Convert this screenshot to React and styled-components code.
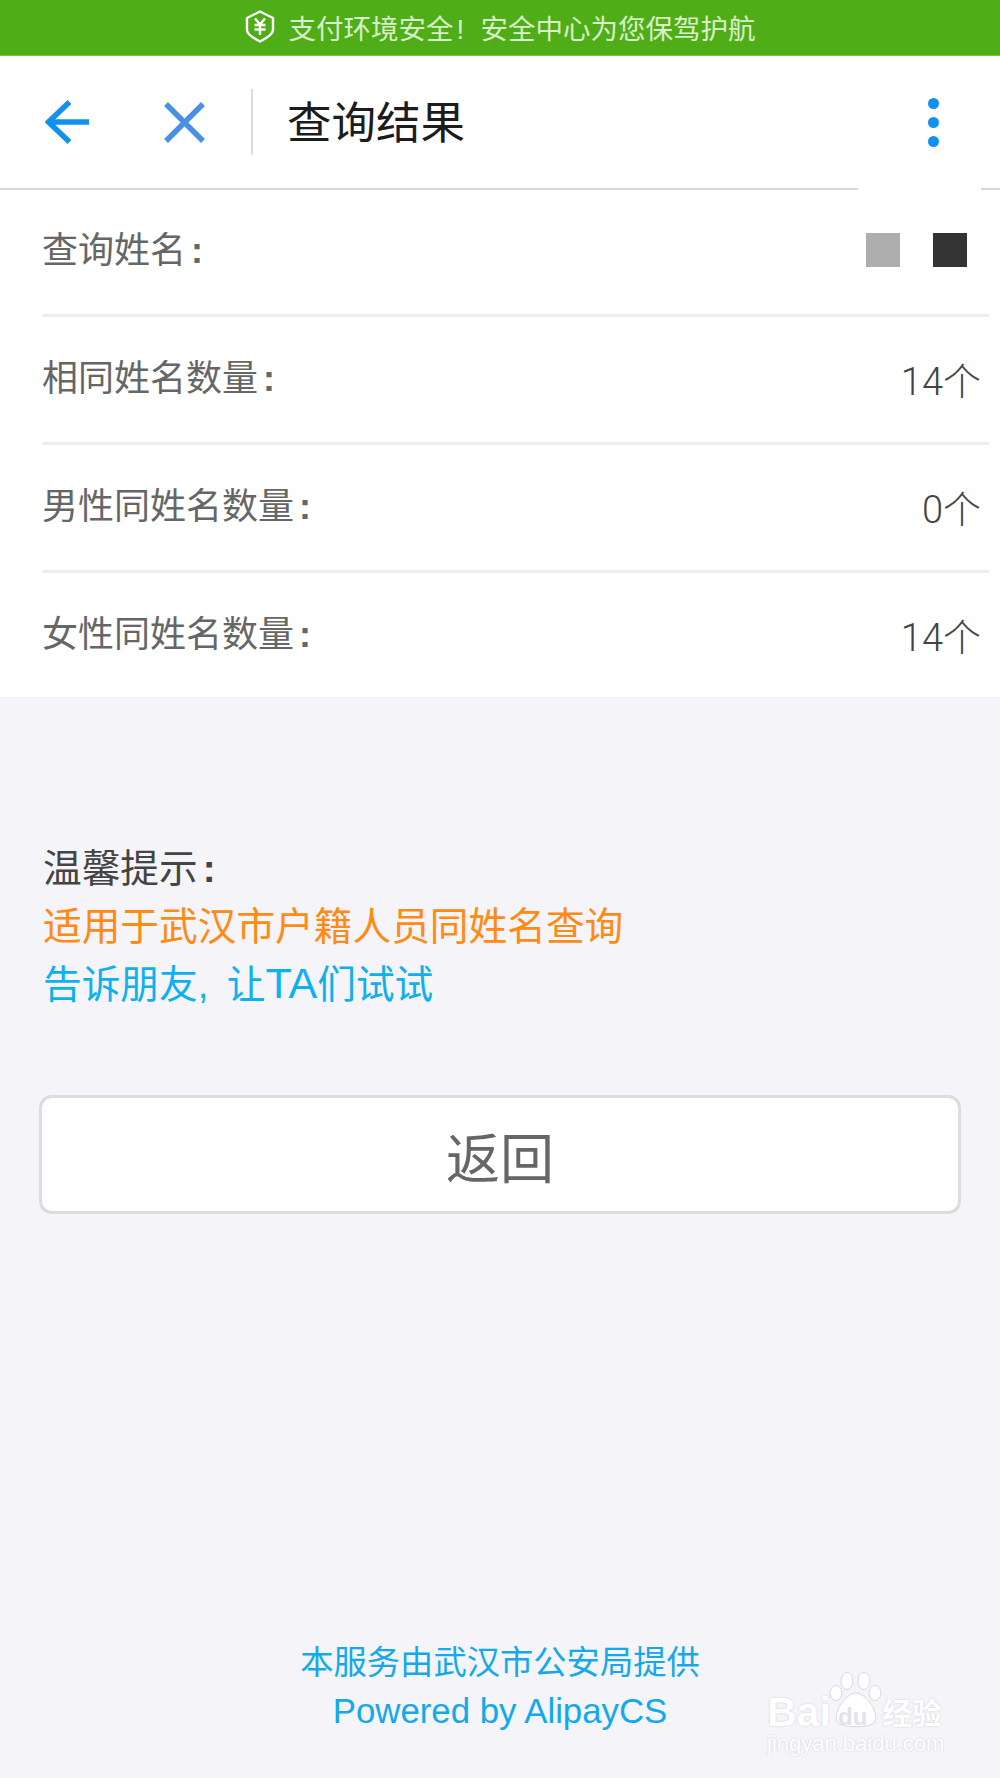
import React from 'react';
import styled, { createGlobalStyle } from 'styled-components';

const Global = createGlobalStyle`
  html, body { margin: 0; padding: 0; background: #f4f4f9; }
  body { font-family: "Noto Sans CJK SC", "Roboto", sans-serif; }
`;
const Page = styled.div`
  width: 1000px; height: 1778px; position: relative; overflow: hidden;
  background: #f4f4f9; display: flex; flex-direction: column;
`;
const SafeBar = styled.div`
  height: 56px; box-sizing: border-box; background: #4fae17; border-bottom: 1px solid #74c634;
  color: #d9efc9; font-size: 27.5px; padding-bottom: 2px;
  display: flex; align-items: center; justify-content: center; gap: 14px;
`;
const Bang = styled.span`
  font-family: "Liberation Sans", sans-serif; display: inline-block; width: 27px; padding-left: 3px;
  box-sizing: border-box; line-height: 0;
`;
const Header = styled.header`
  height: 134px; box-sizing: border-box; background: #fff; border-bottom: 2px solid #d8d8d8;
  display: flex; align-items: center; position: relative;
`;
const IconSlot = styled.div`
  width: ${p => p.$w}px; display: flex; justify-content: center; flex: none;
`;
const Divider = styled.div`
  width: 2px; height: 66px; background: #dcdcdc; flex: none; margin: 0 34px 0 17px;
`;
const Title = styled.h1`
  margin: 0; font-size: 44.5px; font-weight: 400; color: #1c1c1c; flex: 1; line-height: 1;
  position: relative; top: -2px;
`;
const Dots = styled.div`
  display: flex; flex-direction: column; gap: 8px; margin-right: 61px;
`;
const Dot = styled.span`
  width: 11px; height: 11px; border-radius: 50%; background: #1190f0;
`;
const Patch = styled.div`
  position: absolute; left: 858px; width: 123px; bottom: -2px; height: 2px; background: #fff;
`;
const List = styled.section`
  background: #fff; padding-left: 42px; height: 507px; display: flex; flex-direction: column;
`;
const Row = styled.div`
  height: ${p => p.$h}px; flex: none; box-sizing: border-box; margin-right: 11px;
  border-bottom: ${p => (p.$last ? 'none' : '3px solid #ececec')};
  display: flex; justify-content: space-between; padding-right: ${p => p.$pr}px;
`;
const Label = styled.span`
  font-size: 36px; color: #666; line-height: 1; margin-top: ${p => p.$top}px;
`;
const Colon = styled.b`
  font-family: "Liberation Sans", sans-serif; font-weight: 700; margin-left: 5px; line-height: 0;
`;
const Value = styled.span`
  font-size: 38px; color: #444; line-height: 1; margin-top: ${p => p.$top}px; font-weight: 300;
  font-family: "Roboto", "Noto Sans CJK SC", sans-serif;
`;
const Squares = styled.div`
  display: flex; gap: 33px; margin-top: 43px;
`;
const Square = styled.span`
  width: 34px; height: 34px; background: ${p => p.$c};
`;
const Tips = styled.div`
  margin-top: 139px; padding-left: 43px; font-size: 38.7px; line-height: 58px;
`;
const TipLine = styled.div`
  color: ${p => p.$c};
`;
const Comma = styled.span`
  font-family: "Liberation Sans", sans-serif; display: inline-block; width: 29px; line-height: 0;
`;
const Latin = styled.span`
  font-family: "Liberation Sans", sans-serif; font-size: 43px; line-height: 0;
`;
const BackButton = styled.button`
  display: block; margin: 85px 0 0 39px; width: 922px; height: 119px; box-sizing: border-box;
  background: #fff; border: 3px solid #dcdcdc; border-radius: 13px; padding: 2px 0 0;
  font-family: inherit; font-size: 54px; color: #666; line-height: 1;
`;
const Footer = styled.footer`
  position: absolute; left: 0; right: 0; top: 1634px; text-align: center; color: #14a9ea;
  font-size: 33.3px; line-height: 51px;
`;
const Powered = styled.div`
  font-family: "Liberation Sans", sans-serif; font-size: 34.8px;
`;
const Watermark = styled.div`
  position: absolute; left: 767px; top: 1672px; width: 180px; height: 90px; color: #fff;
  font-family: "Liberation Sans", sans-serif; pointer-events: none;
  text-shadow: 0 0 2px #c9c9cf;
`;
const WmBai = styled.span`
  position: absolute; left: 0; top: 20px; font-size: 41px; font-weight: 700; line-height: 1;
`;
const WmDu = styled.span`
  position: absolute; left: 71px; top: 33px; font-size: 24px; font-weight: 700; line-height: 1;
  color: #e2e2e8; text-shadow: none;
`;
const WmCn = styled.span`
  position: absolute; left: 115px; top: 24px; font-size: 30px; font-weight: 700; line-height: 1;
  font-family: "Noto Sans CJK SC", sans-serif; white-space: nowrap;
`;
const WmUrl = styled.span`
  position: absolute; left: 0; top: 61px; font-size: 22px; line-height: 1;
`;
const WmPaw = styled.svg`
  position: absolute; left: 61px; top: 0;
`;

const Shield = () => (
  <svg width="30" height="33" viewBox="0 0 30 33" fill="none">
    <path d="M15 1.5 L28 8 V20 Q28 25 15 31.5 Q2 25 2 20 V8 Z" stroke="#fff" strokeWidth="2.4" strokeLinejoin="round" />
    <path d="M10 8.5 L15 14.5 L20 8.5 M9.5 15 H20.5 M9.5 19.5 H20.5 M15 14.5 V25" stroke="#fff" strokeWidth="2.4" />
  </svg>
);
const Back = () => (
  <svg width="44" height="44" viewBox="0 0 44 44" fill="none" stroke="#1190ee" strokeWidth="5.5">
    <path d="M44 22 H3" />
    <path d="M24.5 2 L3.5 22 L24.5 42" />
  </svg>
);
const Close = () => (
  <svg width="41" height="41" viewBox="0 0 41 41" fill="none" stroke="#4a90e2" strokeWidth="5.5">
    <path d="M2 2 L39 39 M39 2 L2 39" />
  </svg>
);

export default function App() {
  return (
    <Page>
      <Global />
      <SafeBar>
        <Shield />
        <span>支付环境安全<Bang>!</Bang>安全中心为您保驾护航</span>
      </SafeBar>
      <Header>
        <IconSlot $w={134}><Back /></IconSlot>
        <IconSlot $w={100}><Close /></IconSlot>
        <Divider />
        <Title>查询结果</Title>
        <Dots><Dot /><Dot /><Dot /></Dots>
        <Patch />
      </Header>
      <List>
        <Row $h={127} $pr={22}>
          <Label $top={39}>查询姓名<Colon>:</Colon></Label>
          <Squares><Square $c="#adadad" /><Square $c="#333" /></Squares>
        </Row>
        <Row $h={128} $pr={8}>
          <Label $top={40}>相同姓名数量<Colon>:</Colon></Label>
          <Value $top={46}>14个</Value>
        </Row>
        <Row $h={128} $pr={8}>
          <Label $top={40}>男性同姓名数量<Colon>:</Colon></Label>
          <Value $top={46}>0个</Value>
        </Row>
        <Row $h={124} $pr={8} $last>
          <Label $top={40}>女性同姓名数量<Colon>:</Colon></Label>
          <Value $top={46}>14个</Value>
        </Row>
      </List>
      <Tips>
        <TipLine $c="#444">温馨提示<Colon>:</Colon></TipLine>
        <TipLine $c="#ff8a14">适用于武汉市户籍人员同姓名查询</TipLine>
        <TipLine $c="#0fb0ee">告诉朋友<Comma>,</Comma>让<Latin>TA</Latin>们试试</TipLine>
      </Tips>
      <BackButton>返回</BackButton>
      <Footer>
        <div>本服务由武汉市公安局提供</div>
        <Powered>Powered by AlipayCS</Powered>
      </Footer>
      <Watermark>
        <WmPaw width="56" height="56" viewBox="0 0 56 56" fill="#fff" stroke="#d8d8de" strokeWidth="1">
          <ellipse cx="8" cy="21" rx="6" ry="7.5" />
          <ellipse cx="19" cy="9" rx="6" ry="8.5" />
          <ellipse cx="36" cy="9" rx="6" ry="8.5" />
          <ellipse cx="47" cy="21" rx="6" ry="7.5" />
          <path d="M28 21 C18 21 3 42 10 51 C16 56 40 56 46 51 C53 42 38 21 28 21 Z" />
        </WmPaw>
        <WmBai>Bai</WmBai>
        <WmDu>du</WmDu>
        <WmCn>经验</WmCn>
        <WmUrl>jingyan.baidu.com</WmUrl>
      </Watermark>
    </Page>
  );
}
